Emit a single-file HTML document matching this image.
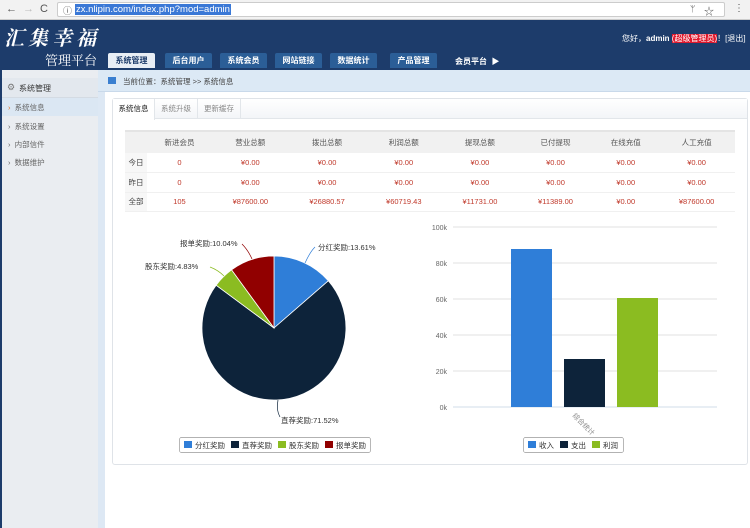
<!DOCTYPE html>
<html><head><meta charset="utf-8"><style>
*{margin:0;padding:0;box-sizing:border-box}
body{width:750px;height:528px;overflow:hidden;font-family:"Liberation Sans","Noto Sans CJK SC",sans-serif;font-size:8px;color:#333;background:#fff;position:relative}
.a{position:absolute}
.nav{position:absolute;top:53px;height:15px;width:47px;background:#2b5e97;color:#fff;font-size:8px;font-weight:bold;text-align:center;line-height:15px;border-radius:2px 2px 0 0}
table{border-collapse:collapse;position:absolute;left:125px;top:130px;width:610px;font-size:7.5px}
td{height:19.5px;text-align:center;color:#c0392b;border-bottom:1px solid #f0f0f0}
th{height:22px;font-weight:normal;background:#f1f1f1;color:#555;border-top:2px solid #e4e4e4}
td.l{color:#444;background:#f7f7f7;width:22px}
.side{position:absolute;left:8px;font-size:7.5px;color:#666}
.lg{display:inline-block;width:8px;height:7px;margin:0 2px 0 4px;vertical-align:-1px}
</style></head><body>
<!-- browser bar -->
<div class="a" style="left:0;top:0;width:750px;height:20px;background:#f2f2f2;border-bottom:1px solid #ccc"></div>
<div class="a" style="left:6px;top:3px;font-size:11px;color:#555">←</div>
<div class="a" style="left:23px;top:3px;font-size:11px;color:#bbb">→</div>
<div class="a" style="left:40px;top:3px;font-size:11px;color:#555">C</div>
<div class="a" style="left:57px;top:2px;width:668px;height:15px;background:#fff;border:1px solid #ccc;border-radius:2px"></div>
<div class="a" style="left:63px;top:4px;font-size:9px;color:#555">ⓘ</div>
<div class="a" style="left:75px;top:4px;font-size:9.5px;color:#fff;background:#3a78d6;padding:0 1px;line-height:11px">zx.nlipin.com/index.php?mod=admin</div>
<div class="a" style="left:704px;top:3px;font-size:10px;color:#555">☆</div>
<div class="a" style="left:690px;top:4px;font-size:9px;color:#555">ᛘ</div>
<div class="a" style="left:734px;top:3px;font-size:10px;color:#555">⋮</div>
<!-- header -->
<div class="a" style="left:0;top:20px;width:750px;height:50px;background:#1d3c6b"></div>
<div class="a" style="left:4px;top:22px;font-size:20px;color:#fff;font-family:'Noto Serif CJK SC',serif;font-style:italic;letter-spacing:4px;font-weight:bold">汇集幸福</div>
<div class="a" style="left:45px;top:50px;font-size:13px;color:#fff;font-family:'Noto Serif CJK SC',serif">管理平台</div>
<div class="nav" style="left:108px;background:#e8eef5;color:#1d3c6b">系统管理</div>
<div class="nav" style="left:165px">后台用户</div>
<div class="nav" style="left:220px">系统会员</div>
<div class="nav" style="left:275px">网站链接</div>
<div class="nav" style="left:330px">数据统计</div>
<div class="nav" style="left:390px">产品管理</div>
<div class="a" style="left:455px;top:56px;color:#fff;font-weight:bold;font-size:8px">会员平台 &nbsp;▶</div>
<div class="a" style="left:622px;top:33px;color:#fff;font-size:8px">您好，<b>admin</b> <span style="color:#fff;background:#e0182c">(超级管理员)</span>！[退出]</div>
<!-- breadcrumb -->
<div class="a" style="left:98px;top:70px;width:652px;height:22px;background:#dce9f5;border-bottom:1px solid #c9d9ea"></div>
<div class="a" style="left:108px;top:77px;width:8px;height:7px;background:#3a7fd0"></div>
<div class="a" style="left:123px;top:76px;font-size:7.5px;color:#444">当前位置：系统管理 &gt;&gt; 系统信息</div>
<!-- sidebar -->
<div class="a" style="left:0;top:70px;width:98px;height:458px;background:#eaedf1;border-left:2px solid #1d3c6b"></div>
<div class="a" style="left:98px;top:92px;width:7px;height:436px;background:#dde8f4"></div>
<div class="a" style="left:2px;top:78px;width:96px;height:20px;background:#e3e8ee;border-bottom:1px solid #d4dbe3"></div>
<div class="a" style="left:7px;top:82px;font-size:9px;color:#777">⚙</div>
<div class="a" style="left:19px;top:83px;font-size:8px;color:#333">系统管理</div>
<div class="a" style="left:2px;top:98px;width:96px;height:18px;background:#dbe7f3"></div>
<div class="side" style="top:102px"><span style="color:#e07020">›</span> &nbsp;系统信息</div>
<div class="side" style="top:121px">› &nbsp;系统设置</div>
<div class="side" style="top:139px">› &nbsp;内部信件</div>
<div class="side" style="top:157px">› &nbsp;数据维护</div>
<!-- panel -->
<div class="a" style="left:112px;top:98px;width:636px;height:367px;border:1px solid #dfe3e8;border-radius:3px;background:#fff"></div>
<div class="a" style="left:113px;top:99px;width:634px;height:20px;background:linear-gradient(#fff,#f3f5f8);border-bottom:1px solid #e2e6ea"></div>
<div class="a" style="left:113px;top:99px;width:42px;height:21px;background:#fff;border-right:1px solid #e2e6ea;font-size:7.5px;text-align:center;line-height:20px;color:#222">系统信息</div>
<div class="a" style="left:155px;top:99px;width:43px;height:20px;border-right:1px solid #e2e6ea;font-size:7.5px;text-align:center;line-height:20px;color:#888">系统升级</div>
<div class="a" style="left:198px;top:99px;width:43px;height:20px;border-right:1px solid #e2e6ea;font-size:7.5px;text-align:center;line-height:20px;color:#888">更新缓存</div>
<table>
<tr><th></th><th>新进会员</th><th>营业总额</th><th>拨出总额</th><th>利润总额</th><th>提现总额</th><th>已付提现</th><th>在线充值</th><th>人工充值</th></tr>
<tr><td class="l">今日</td><td>0</td><td>¥0.00</td><td>¥0.00</td><td>¥0.00</td><td>¥0.00</td><td>¥0.00</td><td>¥0.00</td><td>¥0.00</td></tr>
<tr><td class="l">昨日</td><td>0</td><td>¥0.00</td><td>¥0.00</td><td>¥0.00</td><td>¥0.00</td><td>¥0.00</td><td>¥0.00</td><td>¥0.00</td></tr>
<tr><td class="l">全部</td><td>105</td><td>¥87600.00</td><td>¥26880.57</td><td>¥60719.43</td><td>¥11731.00</td><td>¥11389.00</td><td>¥0.00</td><td>¥87600.00</td></tr>
</table>
<svg class="a" style="left:0;top:0" width="750" height="528" font-family="Liberation Sans,Noto Sans CJK SC,sans-serif" font-size="7.5">
<path d="M274,328 L274,256 A72,72 0 0 1 328.3,280.8 Z" fill="#2f7ed8" stroke="#fff" stroke-width="0.8"/>
<path d="M274,328 L328.3,280.8 A72,72 0 1 1 216.1,285.2 Z" fill="#0d233a" stroke="#fff" stroke-width="0.8"/>
<path d="M274,328 L216.1,285.2 A72,72 0 0 1 231.6,269.8 Z" fill="#8bbc21" stroke="#fff" stroke-width="0.8"/>
<path d="M274,328 L231.6,269.8 A72,72 0 0 1 274,256 Z" fill="#910000" stroke="#fff" stroke-width="0.8"/>
<path d="M305,263 Q310,252 315,247" stroke="#2f7ed8" fill="none" stroke-width="0.7"/>
<path d="M252,259 Q248,250 242,244" stroke="#910000" fill="none" stroke-width="0.7"/>
<path d="M224,276 Q218,270 210,267" stroke="#8bbc21" fill="none" stroke-width="0.7"/>
<path d="M278,400 Q276,410 280,417" stroke="#0d233a" fill="none" stroke-width="0.7"/>
<text x="318" y="250" fill="#333">分红奖励:13.61%</text>
<text x="180" y="246" fill="#333">报单奖励:10.04%</text>
<text x="145" y="269" fill="#333">股东奖励:4.83%</text>
<text x="281" y="423" fill="#333">直荐奖励:71.52%</text>
<rect x="179.5" y="437.5" width="191" height="15" rx="2" fill="#fff" stroke="#999" stroke-width="0.7"/>
<rect x="184" y="441" width="8" height="7" fill="#2f7ed8"/><text x="195" y="448" fill="#333">分红奖励</text>
<rect x="231" y="441" width="8" height="7" fill="#0d233a"/><text x="242" y="448" fill="#333">直荐奖励</text>
<rect x="278" y="441" width="8" height="7" fill="#8bbc21"/><text x="289" y="448" fill="#333">股东奖励</text>
<rect x="325" y="441" width="8" height="7" fill="#910000"/><text x="336" y="448" fill="#333">报单奖励</text>
<g stroke="#d8d8d8" stroke-width="0.8">
<line x1="453" y1="227" x2="717" y2="227"/><line x1="453" y1="263" x2="717" y2="263"/><line x1="453" y1="299" x2="717" y2="299"/><line x1="453" y1="335" x2="717" y2="335"/><line x1="453" y1="371" x2="717" y2="371"/></g>
<line x1="453" y1="407" x2="717" y2="407" stroke="#c0d0e0" stroke-width="0.8"/>
<g fill="#666" text-anchor="end" font-size="7"><text x="447" y="230">100k</text><text x="447" y="266">80k</text><text x="447" y="302">60k</text><text x="447" y="338">40k</text><text x="447" y="374">20k</text><text x="447" y="410">0k</text></g>
<rect x="511" y="249" width="41" height="158" fill="#2f7ed8"/>
<rect x="564" y="359" width="41" height="48" fill="#0d233a"/>
<rect x="617" y="298" width="41" height="109" fill="#8bbc21"/>
<text x="0" y="0" fill="#888" font-size="7" transform="translate(572,416) rotate(45)">综合统计</text>
<rect x="523.5" y="437.5" width="100" height="15" rx="2" fill="#fff" stroke="#999" stroke-width="0.7"/>
<rect x="528" y="441" width="8" height="7" fill="#2f7ed8"/><text x="539" y="448" fill="#333">收入</text>
<rect x="560" y="441" width="8" height="7" fill="#0d233a"/><text x="571" y="448" fill="#333">支出</text>
<rect x="592" y="441" width="8" height="7" fill="#8bbc21"/><text x="603" y="448" fill="#333">利润</text>
</svg>
</body></html>
